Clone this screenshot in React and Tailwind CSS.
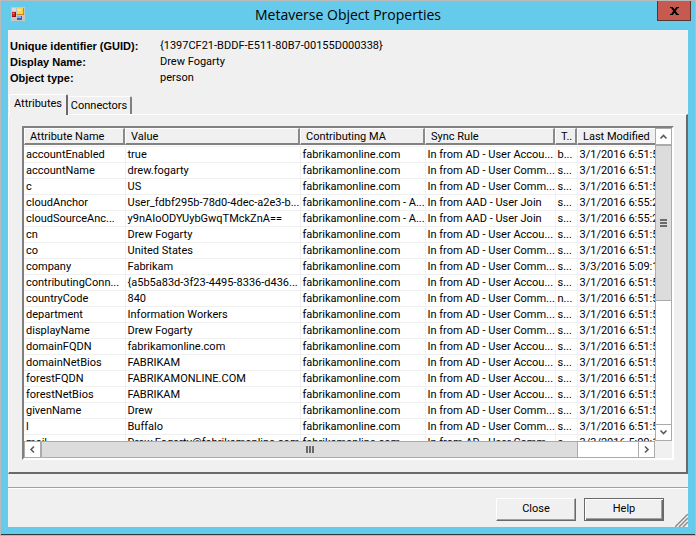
import React from "react";

const details = [
  ["Unique identifier (GUID):", "{1397CF21-BDDF-E511-80B7-00155D000338}"],
  ["Display Name:", "Drew Fogarty"],
  ["Object type:", "person"],
];

const columns = [
  { label: "Attribute Name", width: "w-[101px]" },
  { label: "Value", width: "w-[175px]" },
  { label: "Contributing MA", width: "w-[125px]" },
  { label: "Sync Rule", width: "w-[130px]" },
  { label: "T..", width: "w-[22px]" },
  { label: "Last Modified", width: "w-[120px]" },
];

const MA = "fabrikamonline.com";
const MA_AAD = "fabrikamonline.com - A...";
const ACCOUNT = "In from AD - User Accou...";
const COMMON = "In from AD - User Comm...";
const JOIN = "In from AAD - User Join";

const rows = [
  ["accountEnabled", "true", MA, ACCOUNT, "b...", "3/1/2016 6:51:52"],
  ["accountName", "drew.fogarty", MA, COMMON, "s...", "3/1/2016 6:51:52"],
  ["c", "US", MA, COMMON, "s...", "3/1/2016 6:51:52"],
  ["cloudAnchor", "User_fdbf295b-78d0-4dec-a2e3-b...", MA_AAD, JOIN, "s...", "3/1/2016 6:55:22"],
  ["cloudSourceAnc...", "y9nAIoODYUybGwqTMckZnA==", MA_AAD, JOIN, "s...", "3/1/2016 6:55:22"],
  ["cn", "Drew Fogarty", MA, ACCOUNT, "s...", "3/1/2016 6:51:52"],
  ["co", "United States", MA, COMMON, "s...", "3/1/2016 6:51:52"],
  ["company", "Fabrikam", MA, COMMON, "s...", "3/3/2016 5:09:12"],
  ["contributingConn...", "{a5b5a83d-3f23-4495-8336-d436...", MA, ACCOUNT, "s...", "3/1/2016 6:51:52"],
  ["countryCode", "840", MA, COMMON, "n...", "3/1/2016 6:51:52"],
  ["department", "Information Workers", MA, COMMON, "s...", "3/1/2016 6:51:52"],
  ["displayName", "Drew Fogarty", MA, COMMON, "s...", "3/1/2016 6:51:52"],
  ["domainFQDN", "fabrikamonline.com", MA, ACCOUNT, "s...", "3/1/2016 6:51:52"],
  ["domainNetBios", "FABRIKAM", MA, ACCOUNT, "s...", "3/1/2016 6:51:52"],
  ["forestFQDN", "FABRIKAMONLINE.COM", MA, ACCOUNT, "s...", "3/1/2016 6:51:52"],
  ["forestNetBios", "FABRIKAM", MA, ACCOUNT, "s...", "3/1/2016 6:51:52"],
  ["givenName", "Drew", MA, COMMON, "s...", "3/1/2016 6:51:52"],
  ["l", "Buffalo", MA, COMMON, "s...", "3/1/2016 6:51:52"],
  ["mail", "Drew.Fogarty@fabrikamonline.com", MA, COMMON, "s...", "3/3/2016 5:09:12"],
];

function AppIcon() {
  return (
    <svg width="14" height="14" viewBox="0 0 14 14" aria-hidden="true">
      <rect width="14" height="14" fill="#c9c5bf" />
      <rect x="1" y="1" width="4" height="3" fill="#dcdad6" />
      <rect x="6" y="1" width="7" height="7" fill="#c98a10" />
      <rect x="6" y="1" width="6" height="6" fill="#fbd64a" />
      <rect x="7" y="2" width="3" height="2" fill="#fdeb9a" />
      <rect x="1" y="5" width="4" height="5" fill="#8e1212" />
      <rect x="1" y="5" width="3" height="4" fill="#cf2a22" />
      <rect x="2" y="6" width="1" height="1" fill="#f08a80" />
      <rect x="6" y="9" width="5" height="4" fill="#2f5fc8" />
      <rect x="6" y="9" width="4" height="2" fill="#86aef5" />
    </svg>
  );
}

const arrows = {
  up: "M4.5 9.5L7.5 6.5L10.5 9.5",
  down: "M4.5 5.5L7.5 8.5L10.5 5.5",
  left: "M9 4.5L6 7.5L9 10.5",
  right: "M6 4.5L9 7.5L6 10.5",
};

function ArrowButton({ direction }) {
  return (
    <button
      type="button"
      aria-label={"Scroll " + direction}
      className="flex size-[17px] shrink-0 items-center justify-center border border-[#ababab] bg-white"
    >
      <svg width="15" height="15" viewBox="0 0 15 15" fill="none" stroke="#5a5a5a" strokeWidth="1.6" aria-hidden="true">
        <path d={arrows[direction]} />
      </svg>
    </button>
  );
}

function Tabs() {
  return (
    <div role="tablist" className="relative flex h-5 items-end pl-px">
      <button
        type="button"
        role="tab"
        aria-selected="true"
        className="z-10 -mb-px h-[21px] w-[59px] rounded-t-xs border-t border-r-2 border-l border-t-white border-r-[#696969] border-l-white bg-[#f0f0f0] pb-[2px] text-center leading-4"
      >
        Attributes
      </button>
      <button
        type="button"
        role="tab"
        aria-selected="false"
        className="h-[18px] w-[64px] rounded-t-xs border-t border-r-2 border-t-white border-r-[#808080] text-center leading-4"
      >
        Connectors
      </button>
    </div>
  );
}

function AttributeTable() {
  return (
    <div className="min-w-0 flex-1 overflow-hidden bg-white">
      <table className="w-[673px] table-fixed border-collapse text-left">
        <thead>
          <tr>
            {columns.map((c) => (
              <th key={c.label} className={"border-b border-[#f0f0f0] p-0 pb-px font-normal " + c.width}>
                <div className="h-[17px] overflow-hidden border-t border-r-2 border-b-2 border-l border-t-white border-r-[#8a8a8a] border-b-[#808080] border-l-white bg-[#f0f0f0] pl-[5px] leading-4 whitespace-nowrap">
                  {c.label}
                </div>
              </th>
            ))}
          </tr>
        </thead>
        <tbody>
          {rows.map((r) => (
            <tr key={r[0]} className="h-4">
              {r.map((cell, i) => (
                <td
                  key={i}
                  className="overflow-hidden border-r border-b border-[#f0f0f0] p-0 pl-[2px] leading-[15px] whitespace-nowrap"
                >
                  {cell}
                </td>
              ))}
            </tr>
          ))}
        </tbody>
      </table>
    </div>
  );
}

function VerticalScrollbar() {
  return (
    <div className="flex w-[17px] shrink-0 flex-col bg-white">
      <ArrowButton direction="up" />
      <div className="min-h-0 flex-1 border-x border-[#ababab]">
        <div className="-mx-px flex h-[56%] flex-col items-center justify-center gap-px border border-[#ababab] bg-[#dcdcdc]">
          <span className="h-[2px] w-[7px] bg-[#6a6a6a]" />
          <span className="h-[2px] w-[7px] bg-[#6a6a6a]" />
          <span className="h-[2px] w-[7px] bg-[#6a6a6a]" />
        </div>
      </div>
      <ArrowButton direction="down" />
    </div>
  );
}

function HorizontalScrollbar() {
  return (
    <div className="flex h-[17px] shrink-0 pr-[17px]">
      <ArrowButton direction="left" />
      <div className="min-w-0 flex-1 border-y border-[#ababab] bg-white">
        <div className="-my-px flex h-[17px] w-[90%] items-center justify-center gap-px border border-[#ababab] bg-[#dcdcdc]">
          <span className="h-[7px] w-[2px] bg-[#6a6a6a]" />
          <span className="h-[7px] w-[2px] bg-[#6a6a6a]" />
          <span className="h-[7px] w-[2px] bg-[#6a6a6a]" />
        </div>
      </div>
      <ArrowButton direction="right" />
    </div>
  );
}

export default function App() {
  return (
    <div className="flex h-screen w-full flex-col border border-[#b9b9b9] bg-[#66cbea] font-[Roboto,'Liberation_Sans',sans-serif] text-[11px] text-black">
      <header className="grid h-[28px] shrink-0 grid-cols-[1fr_auto_1fr] px-1">
        <div className="pt-[6px] pl-[6px]">
          <AppIcon />
        </div>
        <h1 className="font-['Open_Sans','Noto_Sans',sans-serif] text-[14px] leading-[27px]">
          Metaverse Object Properties
        </h1>
        <button
          type="button"
          aria-label="Close window"
          className="flex h-5 w-[34px] items-center justify-center justify-self-end border border-t-0 border-[#5b3430] bg-[#c75a50]"
        >
          <svg width="9" height="8" viewBox="0 0 9 8" fill="none" stroke="#000" strokeWidth="2" aria-hidden="true">
            <path d="M1.5 0L7.5 8M7.5 0L1.5 8" />
            <path d="M0 .5H3M6 .5H9M0 7.5H3M6 7.5H9" strokeWidth="1" />
          </svg>
        </button>
      </header>

      <main className="mx-[7px] flex min-h-0 flex-1 flex-col border-y border-[#9db4bd] bg-[#f0f0f0]">
        <dl className="grid shrink-0 grid-cols-[150px_1fr] pt-2 pl-[2px] leading-4">
          {details.map(([label, value]) => (
            <React.Fragment key={label}>
              <dt className="font-['Liberation_Sans',Arial,sans-serif] font-bold">{label}</dt>
              <dd>{value}</dd>
            </React.Fragment>
          ))}
        </dl>

        <div className="mt-2 shrink-0">
          <Tabs />
        </div>
        <section
          role="tabpanel"
          className="flex min-h-0 flex-1 border-t border-r-2 border-b-2 border-l border-t-white border-r-[#696969] border-b-[#696969] border-l-white pt-[11px] pr-3 pb-3 pl-[13px]"
        >
          <div className="flex min-h-0 min-w-0 flex-1 flex-col border-2 border-t-[#808080] border-r-white border-b-white border-l-[#808080] bg-[#f0f0f0]">
            <div className="flex min-h-0 flex-1">
              <AttributeTable />
              <VerticalScrollbar />
            </div>
            <HorizontalScrollbar />
          </div>
        </section>

        <div className="mt-[13px] h-[2px] shrink-0 border-t border-b border-t-[#a0a0a0] border-b-white" />

        <footer className="relative flex shrink-0 justify-end gap-2 pt-[9px] pr-6 pb-[6px]">
          <button
            type="button"
            className="h-[23px] w-20 border border-t-white border-r-[#696969] border-b-[#696969] border-l-white shadow-[inset_-1px_-1px_0_#a0a0a0]"
          >
            Close
          </button>
          <button
            type="button"
            className="h-[23px] w-20 border border-[#696969] shadow-[inset_1px_1px_0_#ffffff,inset_-1px_-1px_0_#696969,inset_-2px_-2px_0_#a0a0a0]"
          >
            Help
          </button>
          <svg className="absolute right-0 bottom-0" width="13" height="13" viewBox="0 0 13 13" fill="none" aria-hidden="true">
            <path d="M1 13L13 1M5 13L13 5M9 13L13 9" stroke="#fff" strokeWidth="1" />
            <path d="M0 13L13 0M4 13L13 4M8 13L13 8" stroke="#8a8a8a" strokeWidth="1.5" />
          </svg>
        </footer>
      </main>
      <div className="h-[7px] shrink-0 border-b border-[#2b3a40]" />
    </div>
  );
}
